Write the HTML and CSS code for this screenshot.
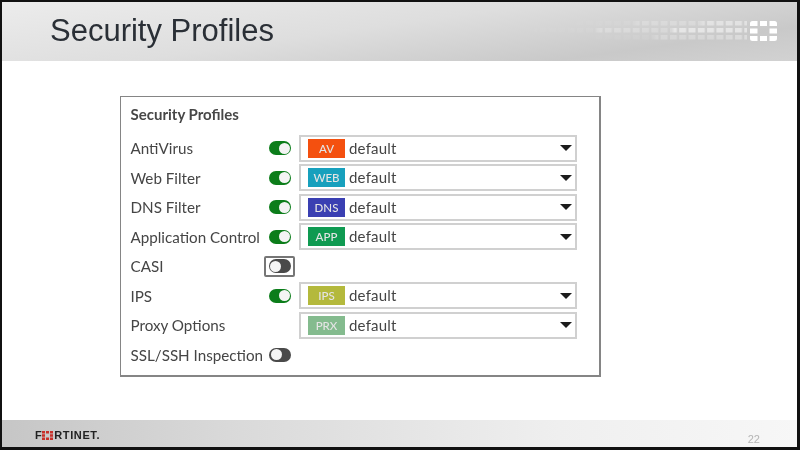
FILE: index.html
```html
<!DOCTYPE html>
<html lang="en">
<head>
<meta charset="utf-8">
<title>Security Profiles</title>
<link rel="stylesheet" href="styles.css">
</head>
<body>
<div class="slide">
  <header class="top">
    <h1 class="title">Security Profiles</h1>
    <svg class="dots" width="277" height="20" viewBox="0 0 277 20">
      <defs>
        <pattern id="cells" x="2.500" y="0" width="9.300" height="7" patternUnits="userSpaceOnUse">
          <rect x="0" y="0" width="7" height="4.500" fill="#fff"/>
        </pattern>
        <linearGradient id="fade1" x1="0" x2="1" y1="0" y2="0">
          <stop offset="0.2" stop-color="#fff" stop-opacity="0"/>
          <stop offset="0.48" stop-color="#fff" stop-opacity=".08"/>
          <stop offset="0.5" stop-color="#fff" stop-opacity=".2"/>
          <stop offset="0.72" stop-color="#fff" stop-opacity=".22"/>
          <stop offset="0.74" stop-color="#fff" stop-opacity=".42"/>
          <stop offset="0.9" stop-color="#fff" stop-opacity=".42"/>
        </linearGradient>
        <linearGradient id="fade2" x1="0" x2="1" y1="0" y2="0">
          <stop offset="0" stop-color="#fff" stop-opacity="0"/>
          <stop offset="0.34" stop-color="#fff" stop-opacity=".06"/>
          <stop offset="0.36" stop-color="#fff" stop-opacity=".22"/>
          <stop offset="0.62" stop-color="#fff" stop-opacity=".22"/>
          <stop offset="0.63" stop-color="#fff" stop-opacity=".5"/>
          <stop offset="0.9" stop-color="#fff" stop-opacity=".5"/>
        </linearGradient>
        <linearGradient id="fade3" x1="0" x2="1" y1="0" y2="0">
          <stop offset="0.25" stop-color="#fff" stop-opacity="0"/>
          <stop offset="0.55" stop-color="#fff" stop-opacity=".08"/>
          <stop offset="0.57" stop-color="#fff" stop-opacity=".22"/>
          <stop offset="0.75" stop-color="#fff" stop-opacity=".26"/>
          <stop offset="0.9" stop-color="#fff" stop-opacity=".36"/>
        </linearGradient>
        <mask id="m1"><rect x="0" y="0" width="277" height="5" fill="url(#fade1)"/></mask>
        <mask id="m2"><rect x="0" y="7" width="277" height="5" fill="url(#fade2)"/></mask>
        <mask id="m3"><rect x="0" y="14" width="277" height="5" fill="url(#fade3)"/></mask>
      </defs>
      <rect x="0" y="0" width="247" height="20" fill="url(#cells)" mask="url(#m1)"/>
      <rect x="0" y="0" width="247" height="20" fill="url(#cells)" mask="url(#m2)"/>
      <rect x="0" y="0" width="247" height="20" fill="url(#cells)" mask="url(#m3)"/>
      <path fill="#fff" d="M250 2.500a2.500 2.500 0 0 1 2.500-2.500h5v5h-7.500zM260 0h7v5h-7zM269.500 0h5a2.500 2.500 0 0 1 2.500 2.500v2.500h-7.500zM250 7.500h7.500v5h-7.500zM269.500 7.500h7.500v5h-7.500zM250 15h7.500v5h-5a2.500 2.500 0 0 1-2.500-2.500zM260 15h7v5h-7zM269.500 15h7.500v2.500a2.500 2.500 0 0 1-2.500 2.500h-5z"/>
    </svg>
  </header>

  <main class="content">
    <section class="panel">
      <h2 class="panel-title">Security Profiles</h2>

      <div class="row">
        <span class="label">AntiVirus</span>
        <span class="toggle-cell"><span class="toggle on"></span></span>
        <div class="select"><span class="badge av">AV</span><span class="value">default</span><span class="caret"></span></div>
      </div>
      <div class="row">
        <span class="label">Web Filter</span>
        <span class="toggle-cell"><span class="toggle on"></span></span>
        <div class="select"><span class="badge web">WEB</span><span class="value">default</span><span class="caret"></span></div>
      </div>
      <div class="row">
        <span class="label">DNS Filter</span>
        <span class="toggle-cell"><span class="toggle on"></span></span>
        <div class="select"><span class="badge dns">DNS</span><span class="value">default</span><span class="caret"></span></div>
      </div>
      <div class="row">
        <span class="label">Application Control</span>
        <span class="toggle-cell"><span class="toggle on"></span></span>
        <div class="select"><span class="badge app">APP</span><span class="value">default</span><span class="caret"></span></div>
      </div>
      <div class="row">
        <span class="label">CASI</span>
        <span class="toggle-cell"><span class="focus"><span class="toggle"></span></span></span>
      </div>
      <div class="row">
        <span class="label">IPS</span>
        <span class="toggle-cell"><span class="toggle on"></span></span>
        <div class="select"><span class="badge ips">IPS</span><span class="value">default</span><span class="caret"></span></div>
      </div>
      <div class="row">
        <span class="label">Proxy Options</span>
        <span class="toggle-cell"></span>
        <div class="select"><span class="badge prx">PRX</span><span class="value">default</span><span class="caret"></span></div>
      </div>
      <div class="row">
        <span class="label">SSL/SSH Inspection</span>
        <span class="toggle-cell"><span class="toggle"></span></span>
      </div>
    </section>
  </main>

  <footer class="bottom">
    <div class="logo">
      <span class="logo-text">F</span>
      <svg class="logo-mark" width="11" height="9" viewBox="0 0 11 9">
        <path fill="#c8312b" d="M0 0h3v2.500h-3zM4 0h3v2.500h-3zM8 0h3v2.500h-3zM0 3.300h3v2.400h-3zM8 3.300h3v2.400h-3zM0 6.500h3v2.500h-3zM4 6.500h3v2.500h-3zM8 6.500h3v2.500h-3z"/>
      </svg>
      <span class="logo-text">RTINET.</span>
    </div>
    <span class="page">22</span>
  </footer>
</div>
</body>
</html>
```

FILE: styles.css
```css
* { box-sizing: border-box; }
html, body { margin: 0; padding: 0; background: #fff; }
.slide {
  width: 800px;
  height: 450px;
  display: flex;
  flex-direction: column;
  border: solid #111;
  border-width: 2px 3px 3px 2px;
  overflow: hidden;
  background: #fff;
  filter: blur(.35px);
}
.top {
  height: 59px;
  flex: none;
  display: flex;
  align-items: flex-start;
  justify-content: space-between;
  padding: 0 20px 0 48px;
  background: linear-gradient(172deg, #ececec 0%, #dedede 45%, #c9c9c9 80%, #d2d2d2 100%);
}
.title {
  margin: 10px 0 0;
  font: 400 31px/38px "Liberation Sans", Arial, sans-serif;
  color: #2a2f36;
}
.dots { margin-top: 19px; }
.content { flex: 1; padding: 35px 0 0 118px; }
.panel {
  width: 481px;
  height: 281px;
  border: 2px solid #858585;
  border-width: 1px 2px 2px 1px;
  padding: 7px 22px 0 9.500px;
  color: #454545;
  font-family: Lato, sans-serif;
}
.panel-title {
  margin: 0 0 9.500px;
  height: 20px;
  font: 700 15px/20px Lato, sans-serif;
  color: #474747;
}
.row {
  height: 29.500px;
  display: flex;
  align-items: center;
}
.label {
  width: 138.500px;
  flex: none;
  font-size: 15.200px;
  line-height: 20px;
  white-space: nowrap;
}
.toggle-cell {
  width: 30px;
  flex: none;
  display: flex;
  align-items: center;
}
.toggle {
  display: block;
  width: 22px;
  height: 14px;
  border-radius: 7px;
  background: #4a4a4a;
  position: relative;
  flex: none;
}
.toggle::after {
  content: "";
  position: absolute;
  top: 1.500px;
  left: 1.500px;
  width: 11px;
  height: 11px;
  border-radius: 50%;
  background: #f4f4f4;
}
.toggle.on { background: #0c7d1a; }
.toggle.on::after { left: 9.500px; }
.focus {
  margin-left: -5px;
  width: 31px;
  height: 21px;
  border: 2px solid #767676;
  border-radius: 2px;
  display: flex;
  align-items: center;
  justify-content: center;
}
.select {
  width: 278px;
  height: 27px;
  flex: none;
  border: 2px solid #d0d0d0;
  display: flex;
  align-items: center;
  padding: 0 3px 0 7px;
}
.badge {
  width: 37px;
  height: 19px;
  flex: none;
  display: flex;
  align-items: center;
  justify-content: center;
  color: #e4e4e4;
  font: 500 11.500px/19px Lato, sans-serif;
}
.av { background: #f4500f; }
.web { background: #17a0bd; }
.dns { background: #3a3fb2; }
.app { background: #0f9a51; }
.ips { background: #b4b93c; }
.prx { background: #84bb8e; }
.value {
  margin-left: 4px;
  flex: 1;
  font-size: 15px;
  letter-spacing: .2px;
  color: #444;
  margin-top: -1px;
}
.caret {
  width: 0;
  height: 0;
  border: solid transparent;
  border-width: 6px 6px 0;
  border-top-color: #1c1c1c;
}
.bottom {
  height: 27px;
  flex: none;
  display: flex;
  align-items: center;
  justify-content: space-between;
  padding: 0 37px 0 33px;
  background: linear-gradient(90deg, #c6c6c6 0%, #dadada 30%, #efefef 70%, #f7f7f7 100%);
}
.logo { display: flex; align-items: center; margin-top: 3px; }
.logo-text {
  font: 700 11px/12px "Liberation Sans", Arial, sans-serif;
  letter-spacing: .6px;
  color: #222;
}
.logo-mark { margin: 0 1px 0 0; }
.page {
  font: 400 11px/12px "Liberation Sans", Arial, sans-serif;
  color: #b5b5b5;
  margin-top: 10px;
}
```
